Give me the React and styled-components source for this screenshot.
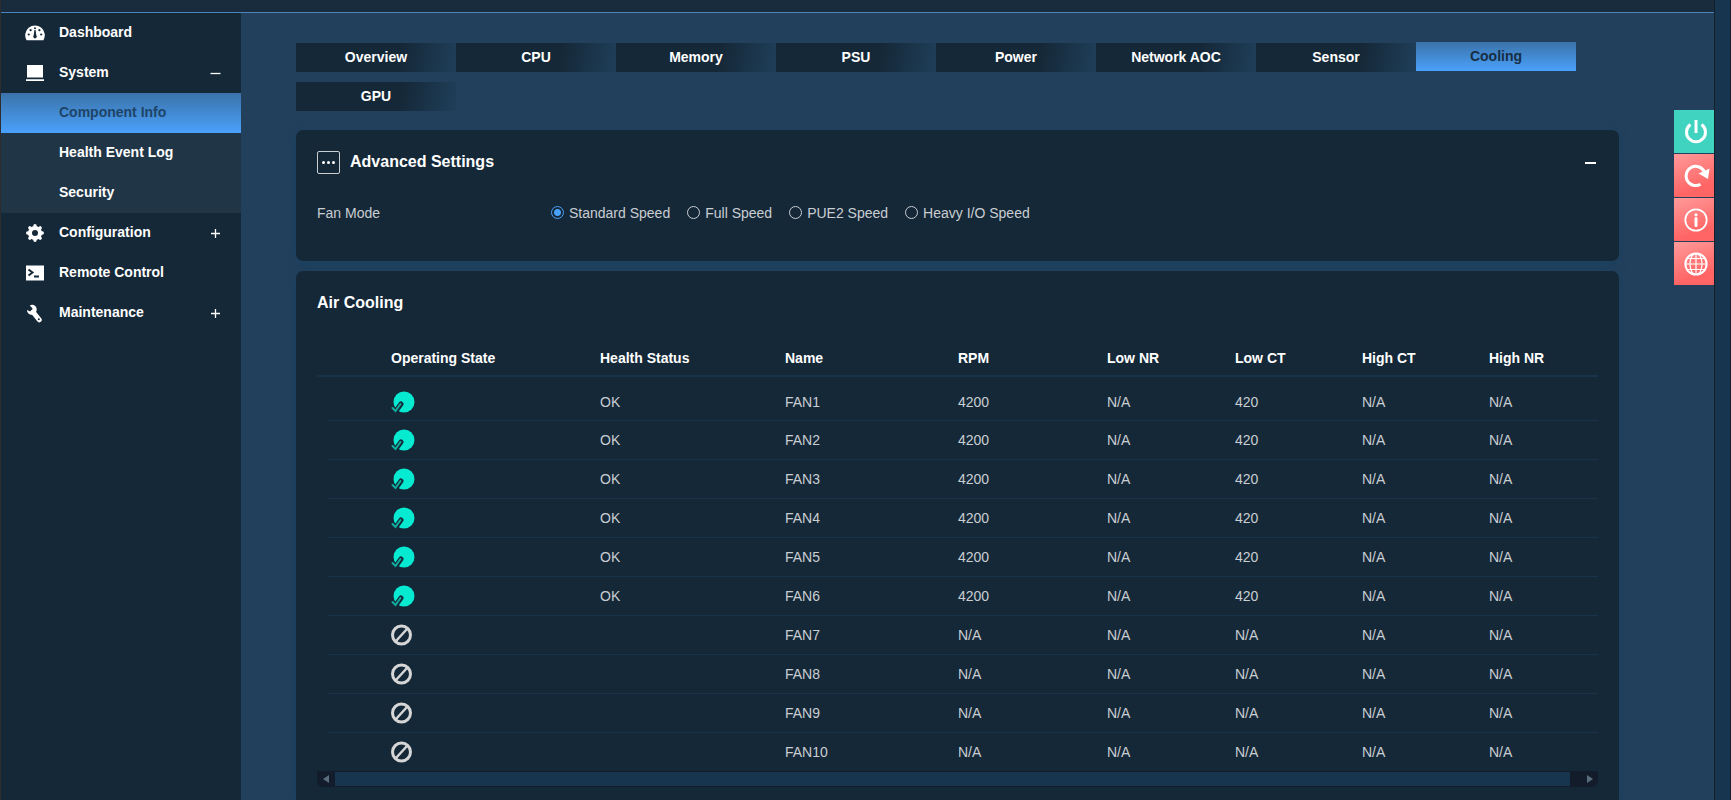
import * as React from "react";
import styled, { createGlobalStyle, css } from "styled-components";

const GlobalStyle = createGlobalStyle`
  * {
    box-sizing: border-box;
  }

  body {
    margin: 0;
    background-color: #22405c;
    font-family: "Liberation Sans", Arial, sans-serif;
    font-size: 14px;
    color: #c9ced2;
  }

  button {
    font: inherit;
    color: inherit;
    background: none;
    border: none;
    padding: 0;
    cursor: pointer;
  }
`;

const Page = styled.div`
  height: 100vh;
  display: flex;
  overflow: hidden;
  border-left: 1px solid #2d2d30;
  border-right: 1px solid #141f2b;
`;

const Window = styled.div`
  flex: 1;
  min-width: 0;
  display: flex;
  flex-direction: column;
`;

const TopBar = styled.header`
  flex: none;
  height: 13px;
  background-color: #192c3d;
  border-bottom: 1px solid #4d84bd;
`;

const Body = styled.div`
  flex: 1;
  min-height: 0;
  display: flex;
`;

const PageScrollbar = styled.div`
  flex: none;
  width: 16px;
  background-color: #18354f;
  border-left: 1px solid #141f2b;
`;

const Sidebar = styled.nav`
  flex: none;
  width: 240px;
  background-color: #152838;
`;

const MenuList = styled.ul`
  list-style: none;
  margin: 0;
  padding: 0;
`;

const SubMenu = styled(MenuList)`
  background-color: #203546;
`;

const menuItem = css`
  width: 100%;
  height: 40px;
  padding: 0 20px 2px 24px;
  display: flex;
  align-items: center;
  color: #ffffff;
  font-weight: bold;
  text-align: left;
  text-decoration: none;
`;

const MenuLink = styled.a`
  ${menuItem}
`;

const MenuButton = styled.button`
  ${menuItem}
`;

const SubLink = styled.a`
  ${menuItem}
  padding-left: 58px;
  ${({ $active }) => $active && css`
    color: #1e4468;
    background: linear-gradient(#3b73a9, #4aa1fb);
  `}
`;

const MenuIcon = styled.span`
  width: 20px;
  margin-right: 14px;
  padding-top: 2px;
  display: flex;
  justify-content: center;
`;

const Toggle = styled.svg`
  margin: 2px 0 0 auto;
  width: 11px;
  height: 11px;
`;

const Main = styled.main`
  flex: 1;
  min-width: 0;
  padding: 30px 0 0 55px;
`;

const Content = styled.div`
  margin-right: 95px;
  height: 100%;
  display: flex;
  flex-direction: column;
`;

const Tabs = styled.div`
  display: flex;
  flex-wrap: wrap;
  row-gap: 10px;
  margin-bottom: 19px;
`;

const Tab = styled.button`
  width: 160px;
  height: 29px;
  padding-bottom: 2px;
  font-weight: bold;
  color: #ffffff;
  background: linear-gradient(100deg, #152838 65%, #1f3f59);
  ${({ $active }) => $active && css`
    color: #172e44;
    background: linear-gradient(#3b73a9, #4aa1fb);
    transform: translateY(-1px);
  `}
`;

const Card = styled.section`
  flex: ${({ $fill }) => ($fill ? "1" : "none")};
  padding: ${({ $fill }) => ($fill ? "22px 21px 0" : "21px 21px 38px")};
  margin-bottom: ${({ $fill }) => ($fill ? "0" : "10px")};
  background-color: #152838;
  border-radius: ${({ $fill }) => ($fill ? "7px 7px 0 0" : "7px")};
  box-shadow: 0 2px 8px rgba(24, 66, 100, 0.8);
`;

const CardHeader = styled.div`
  display: flex;
  align-items: center;
  gap: 10px;
`;

const CardTitle = styled.h2`
  margin: 0;
  padding-bottom: 2px;
  font-size: 16px;
  line-height: 20px;
  color: #ffffff;
`;

const MoreButton = styled.button`
  width: 23px;
  height: 23px;
  display: flex;
  align-items: center;
  justify-content: center;
  border: 1px solid #c9ced2;
  border-radius: 2px;
`;

const CollapseButton = styled.button`
  margin-left: auto;
  padding: 1px 2px 0 0;
  display: flex;
`;

const FanMode = styled.fieldset`
  margin: 29px 0 0;
  padding: 0;
  border: none;
  display: flex;
  align-items: center;
  line-height: 20px;
`;

const FanModeLabel = styled.span`
  width: 234px;
`;

const Options = styled.div`
  display: flex;
  gap: 17px;
`;

const Option = styled.label`
  display: flex;
  align-items: center;
  gap: 5px;
`;

const Radio = styled.input`
  appearance: none;
  width: 13px;
  height: 13px;
  margin: 0 0 2px;
  border: 1px solid #c9ced2;
  border-radius: 50%;

  &:checked {
    border-color: #4aa1fb;
    background: radial-gradient(circle, #4aa1fb 3px, transparent 4px);
  }
`;

const FanTable = styled.table`
  width: 100%;
  margin-top: 27px;
  table-layout: fixed;
  border-collapse: separate;
  border-spacing: 0;

  th,
  td {
    padding: 0;
    text-align: left;
  }

  thead th,
  thead td {
    height: 35px;
    padding-bottom: 2px;
    color: #ffffff;
    border-bottom: 2px solid #18344c;
  }

  tbody td {
    height: 39px;
  }

  tbody tr:not(:last-child) td:not(:first-child) {
    border-bottom: 1px solid #18344c;
  }

  tbody tr:first-child td {
    height: 44px;
    padding-top: 6px;
  }

  tbody tr:last-child td {
    height: 38px;
  }

  svg {
    display: block;
  }
`;

const HScroll = styled.div`
  height: 16px;
  display: flex;
  background-color: #131c2b;
  border-radius: 0 0 6px 6px;
`;

const HScrollThumb = styled.div`
  flex: 1;
  margin: 1px 0;
  background-color: #18354f;
`;

const HScrollButton = styled.button`
  width: ${({ $wide }) => ($wide ? "28px" : "18px")};
  padding-left: ${({ $wide }) => ($wide ? "11px" : "0")};
  display: flex;
  align-items: center;
  justify-content: center;
`;

const QuickActions = styled.div`
  position: absolute;
  top: 110px;
  right: 17px;
  display: flex;
  flex-direction: column;
  gap: 1px;
`;

const QuickButton = styled.button`
  width: 40px;
  height: 43px;
  padding: 1px 0 0 3px;
  display: flex;
  align-items: center;
  justify-content: center;
  color: #ffffff;
  background: ${({ $power }) => ($power ? "#40d3c0" : "linear-gradient(160deg, #ff9a9a, #ff6565 75%)")};

  svg {
    flex: none;
  }
`;

const DashboardIcon = () => (
  <svg width="20" height="16" viewBox="0 0 20 16">
    <path d="M1.600 15.300A9.800 9.800 0 1 1 18.400 15.300z" fill="currentColor" />
    <g fill="#152838">
      <circle cx="3.800" cy="9.500" r="1.100" />
      <circle cx="5.600" cy="5.200" r="1.100" />
      <circle cx="10" cy="3.300" r="1" />
      <circle cx="14.400" cy="5.200" r="1.100" />
      <circle cx="16.200" cy="9.500" r="1.100" />
      <path d="M9.400 5h1.200l.7 5.300a1.800 1.800 0 1 1-2.600 0z" />
    </g>
  </svg>
);

const MonitorIcon = () => (
  <svg width="18" height="16" viewBox="0 0 18 16" fill="currentColor">
    <path d="M1 0h16v12.500H1zM0 14.300h18V16H0z" />
  </svg>
);

const GearIcon = () => (
  <svg width="18" height="18" viewBox="0 0 18 18" fill="none" stroke="currentColor">
    <circle cx="9" cy="9" r="5" strokeWidth="4" />
    {[0, 45, 90, 135].map((angle) => (
      <path
        key={angle}
        d="M9 1.700v2M9 14.300v2"
        transform={`rotate(${angle} 9 9)`}
        strokeWidth="3.400"
        strokeLinecap="round"
      />
    ))}
  </svg>
);

const TerminalIcon = () => (
  <svg width="18" height="16" viewBox="0 0 18 16">
    <path d="M0 0.500h18v15H0z" fill="currentColor" />
    <path d="M2.500 4.500l4 3-4 3M8 11.500h5" fill="none" stroke="#152838" strokeWidth="2" />
  </svg>
);

const WrenchIcon = () => (
  <svg width="18" height="19" viewBox="0 0 18 19">
    <path d="M7 8l6.200 7.800" stroke="currentColor" strokeWidth="5" strokeLinecap="round" />
    <path
      d="M6.500 0.800C9.500 1.200 11.500 4 10.500 7c-1 3-4 4.500-6.500 3.500C2.200 9.800 1 8.200 1 6l3.200 1.600 2.300-1L6.300 4 3.800 1.800C4.500 1 5.500.7 6.500.8z"
      fill="currentColor"
    />
    <circle cx="12.800" cy="15.300" r="1" fill="#152838" />
  </svg>
);

const PlusMinus = ({ open }) => (
  <Toggle viewBox="0 0 11 11" stroke="currentColor" strokeWidth="1.300">
    <path d={open ? "M0.500 5.500h10" : "M1 5.500h9M5.500 1v9"} />
  </Toggle>
);

const OkIcon = () => (
  <svg width="24" height="22" viewBox="0 0 24 22">
    <circle cx="13" cy="11" r="10.500" fill="#06ead2" />
    <path d="M1.500 17.500l3 3 5.500-7.500" fill="none" stroke="#152838" strokeWidth="5" strokeLinecap="round" />
    <path d="M1.500 17l3 3 5-7" fill="none" stroke="#0fae9f" strokeWidth="2" strokeLinecap="round" />
  </svg>
);

const AbsentIcon = () => (
  <svg width="21" height="22" viewBox="0 0 21 22" fill="none" stroke="#d6d6d6" strokeWidth="3">
    <circle cx="10.500" cy="11" r="9" />
    <path d="M5 17L16 5" strokeWidth="2.500" />
  </svg>
);

const PowerIcon = () => (
  <svg width="24" height="24" viewBox="0 0 24 24" fill="none" stroke="currentColor" strokeWidth="3">
    <path d="M12 0v13M6.500 4.500a9.500 9.500 0 1 0 11 0" />
  </svg>
);

const ResetIcon = () => (
  <svg width="24" height="24" viewBox="0 0 24 24" overflow="visible">
    <path d="M16.500 20.300A9.600 9.600 0 1 1 20.200 7.500" fill="none" stroke="currentColor" strokeWidth="3" />
    <path d="M25.500 4.500L24 15 14.500 9.500z" fill="currentColor" />
  </svg>
);

const InfoIcon = () => (
  <svg width="24" height="24" viewBox="0 0 24 24" fill="none" stroke="currentColor">
    <circle cx="12" cy="12" r="10.700" strokeWidth="1.800" />
    <path d="M12 10.500v7" strokeWidth="3" strokeLinecap="round" />
    <circle cx="12" cy="6.800" r="1.600" fill="currentColor" stroke="none" />
  </svg>
);

const GlobeIcon = () => (
  <svg width="24" height="24" viewBox="0 0 24 24" fill="none" stroke="currentColor" strokeWidth="1.200">
    <circle cx="12" cy="12" r="10.600" strokeWidth="2" />
    <ellipse cx="12" cy="12" rx="6" ry="10.500" />
    <path d="M12 1.500v21M1.500 12h21M3 6.500h18M3 17.500h18" />
  </svg>
);

const tabs = ["Overview", "CPU", "Memory", "PSU", "Power", "Network AOC", "Sensor", "Cooling", "GPU"];
const fanModes = ["Standard Speed", "Full Speed", "PUE2 Speed", "Heavy I/O Speed"];
const headings = ["Operating State", "Health Status", "Name", "RPM", "Low NR", "Low CT", "High CT", "High NR"];
const columnWidths = [10, 64, 209, 185, 173, 149, 128, 127, 127, 109];

// The first six fans are fitted, the rest are empty slots
const fans = Array.from({ length: 10 }, (_, i) => ({ name: `FAN${i + 1}`, present: i < 6 }));

function App() {
  const [tab, setTab] = React.useState("Cooling");
  const [mode, setMode] = React.useState("Standard Speed");

  return (
    <Page>
      <GlobalStyle />
      <Window>
        <TopBar />
        <Body>
          <Sidebar>
            <MenuList>
              <li>
                <MenuLink href="#dashboard"><MenuIcon><DashboardIcon /></MenuIcon>Dashboard</MenuLink>
              </li>
              <li>
                <MenuButton><MenuIcon><MonitorIcon /></MenuIcon>System<PlusMinus open /></MenuButton>
                <SubMenu>
                  <li><SubLink href="#component" $active>Component Info</SubLink></li>
                  <li><SubLink href="#health">Health Event Log</SubLink></li>
                  <li><SubLink href="#security">Security</SubLink></li>
                </SubMenu>
              </li>
              <li>
                <MenuButton><MenuIcon><GearIcon /></MenuIcon>Configuration<PlusMinus /></MenuButton>
              </li>
              <li>
                <MenuLink href="#remote"><MenuIcon><TerminalIcon /></MenuIcon>Remote Control</MenuLink>
              </li>
              <li>
                <MenuButton><MenuIcon><WrenchIcon /></MenuIcon>Maintenance<PlusMinus /></MenuButton>
              </li>
            </MenuList>
          </Sidebar>
          <Main>
            <Content>
              <Tabs>
                {tabs.map((name) => (
                  <Tab key={name} $active={name === tab} onClick={() => setTab(name)}>{name}</Tab>
                ))}
              </Tabs>
              <Card>
                <CardHeader>
                  <MoreButton aria-label="More">
                    <svg width="13" height="3" viewBox="0 0 13 3" fill="#ffffff">
                      <circle cx="1.500" cy="1.500" r="1.500" />
                      <circle cx="6.500" cy="1.500" r="1.500" />
                      <circle cx="11.500" cy="1.500" r="1.500" />
                    </svg>
                  </MoreButton>
                  <CardTitle>Advanced Settings</CardTitle>
                  <CollapseButton aria-label="Collapse">
                    <svg width="11" height="2" viewBox="0 0 11 2" fill="#ffffff"><path d="M0 0h11v2H0z" /></svg>
                  </CollapseButton>
                </CardHeader>
                <FanMode aria-labelledby="fan-mode">
                  <FanModeLabel id="fan-mode">Fan Mode</FanModeLabel>
                  <Options>
                    {fanModes.map((name) => (
                      <Option key={name}>
                        <Radio type="radio" name="fanMode" checked={mode === name} onChange={() => setMode(name)} />
                        {name}
                      </Option>
                    ))}
                  </Options>
                </FanMode>
              </Card>
              <Card $fill>
                <CardTitle>Air Cooling</CardTitle>
                <FanTable>
                  <colgroup>
                    {columnWidths.map((width, i) => <col key={i} width={width} />)}
                  </colgroup>
                  <thead>
                    <tr>
                      <td /><td />
                      {headings.map((name) => <th key={name}>{name}</th>)}
                    </tr>
                  </thead>
                  <tbody>
                    {fans.map(({ name, present }) => (
                      <tr key={name}>
                        <td /><td />
                        <td>{present ? <OkIcon /> : <AbsentIcon />}</td>
                        <td>{present && "OK"}</td>
                        <td>{name}</td>
                        <td>{present ? "4200" : "N/A"}</td>
                        <td>N/A</td>
                        <td>{present ? "420" : "N/A"}</td>
                        <td>N/A</td>
                        <td>N/A</td>
                      </tr>
                    ))}
                  </tbody>
                </FanTable>
                <HScroll>
                  <HScrollButton aria-label="Scroll left">
                    <svg width="6" height="8" viewBox="0 0 6 8" fill="#5a6d7b"><path d="M6 0v8L0 4z" /></svg>
                  </HScrollButton>
                  <HScrollThumb />
                  <HScrollButton $wide aria-label="Scroll right">
                    <svg width="6" height="8" viewBox="0 0 6 8" fill="#5a6d7b"><path d="M0 0v8l6-4z" /></svg>
                  </HScrollButton>
                </HScroll>
              </Card>
            </Content>
          </Main>
        </Body>
      </Window>
      <PageScrollbar />
      <QuickActions>
        <QuickButton $power aria-label="Power"><PowerIcon /></QuickButton>
        <QuickButton aria-label="Reset"><ResetIcon /></QuickButton>
        <QuickButton aria-label="Information"><InfoIcon /></QuickButton>
        <QuickButton aria-label="Language"><GlobeIcon /></QuickButton>
      </QuickActions>
    </Page>
  );
}

export default App;
